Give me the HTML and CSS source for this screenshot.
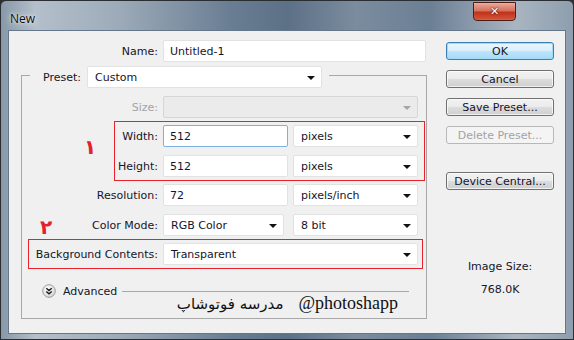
FILE: index.html
```html
<!DOCTYPE html>
<html lang="en">
<head>
    <meta charset="UTF-8">
    <meta name="viewport" content="width=device-width, initial-scale=1.0">
    <link rel="stylesheet" href="styles.css">
    <title>New</title>
</head>
<body>
    <div class="window">
        <div class="titlebar">
            <span class="title">New</span>
            <button class="close">&#x2715;</button>
        </div>
        <div class="client">
            <div class="main">
                <div class="row name-row">
                    <label class="lbl">Name:</label>
                    <input class="field wide" type="text" value="Untitled-1">
                </div>

                <div class="group">
                    <div class="preset-row">
                        <label class="preset-lbl">Preset:</label>
                        <div class="select preset">Custom</div>
                    </div>

                    <div class="row">
                        <label class="lbl disabled">Size:</label>
                        <div class="select full off"></div>
                    </div>

                    <!-- red marker 1 -->
                    <div class="mark mark-one">
                        <div class="row first">
                            <label class="lbl">Width:</label>
                            <input class="field focus" type="text" value="512">
                            <div class="select unit">pixels</div>
                        </div>
                        <div class="row">
                            <label class="lbl">Height:</label>
                            <input class="field" type="text" value="512">
                            <div class="select unit">pixels</div>
                        </div>
                    </div>

                    <div class="row after-mark">
                        <label class="lbl">Resolution:</label>
                        <input class="field" type="text" value="72">
                        <div class="select unit">pixels/inch</div>
                    </div>

                    <div class="row">
                        <label class="lbl">Color Mode:</label>
                        <div class="select mode">RGB Color</div>
                        <div class="select unit">8 bit</div>
                    </div>

                    <!-- red marker 2 -->
                    <div class="mark mark-two">
                        <div class="row first">
                            <label class="lbl">Background Contents:</label>
                            <div class="select full">Transparent</div>
                        </div>
                    </div>

                    <div class="advanced">
                        <svg class="chev" width="14" height="14" viewBox="0 0 14 14">
                            <defs>
                                <radialGradient id="knob" cx="0.4" cy="0.35" r="0.7">
                                    <stop offset="0" stop-color="#ffffff"/>
                                    <stop offset="1" stop-color="#d4d4d4"/>
                                </radialGradient>
                            </defs>
                            <circle cx="7" cy="7" r="6.3" fill="url(#knob)" stroke="#9c9c9c"/>
                            <path d="M4.3 4.2 L7 6.6 L9.7 4.2 M4.3 7.4 L7 9.8 L9.7 7.4" fill="none" stroke="#1c1c1c" stroke-width="1.4"/>
                        </svg>
                        <span>Advanced</span>
                        <div class="rule"></div>
                    </div>

                    <div class="watermark">
                        <span class="fa" lang="fa" dir="rtl">مدرسه فوتوشاپ</span>
                        <span class="handle">@photoshapp</span>
                    </div>

                    <span class="num num-one" lang="fa">۱</span>
                    <span class="num num-two" lang="fa">۲</span>
                </div>
            </div>

            <div class="side">
                <button class="btn default">OK</button>
                <button class="btn">Cancel</button>
                <button class="btn">Save Preset...</button>
                <button class="btn" disabled>Delete Preset...</button>
                <button class="btn device">Device Central...</button>
                <div class="size-label">Image Size:</div>
                <div class="size-value">768.0K</div>
            </div>
        </div>
    </div>
</body>
</html>
```

FILE: styles.css
```css
/* Photoshop "New" dialog, Windows 7 frame */
* {
    box-sizing: border-box;
}

body {
    margin: 0;
    background: #2b2f33;
    font-family: "DejaVu Sans", Verdana, sans-serif;
    font-size: 11px;
    color: #15152a;
}

.window {
    width: 574px;
    height: 340px;
    display: flex;
    flex-direction: column;
    padding: 0 7px 5px 7px;
    border: 1px solid #2a2e33;
    border-radius: 6px 6px 0 0;
    background: linear-gradient(90deg, #8898a8 0%, #b3bfca 6%, #9eacba 20%, #6a7e93 40%, #5c7086 50%, #7b8c9e 62%, #6b7f94 75%, #a9b5c1 90%, #8e9eae 100%);
}

.titlebar {
    height: 29px;
    display: flex;
    align-items: flex-start;
    justify-content: space-between;
}

.title {
    margin: 9px 0 0 2px;
    font-family: "Open Sans", "DejaVu Sans", sans-serif;
    font-size: 12px;
    color: #0c0c0c;
    text-shadow: 0 0 6px rgba(255, 255, 255, 0.9), 0 0 2px rgba(255, 255, 255, 0.8);
}

.close {
    width: 43px;
    height: 19px;
    margin: 1px 50px 0 0;
    padding: 0;
    border: 1px solid #4c1d16;
    border-radius: 0 0 4px 4px;
    background: linear-gradient(#e9aa9c 0%, #d7705c 45%, #c0321c 55%, #d4573a 100%);
    color: #fff;
    font-family: "DejaVu Sans", sans-serif;
    font-size: 11px;
    font-weight: bold;
    line-height: 16px;
    text-shadow: 0 0 2px #4a1208, 0 0 1px #4a1208;
    box-shadow: inset 0 0 1px rgba(255, 255, 255, 0.6);
}

.client {
    flex: 1;
    display: flex;
    border: 1px solid #65778a;
    background: #f0f0f0;
}

/* left column */
.main {
    width: 418px;
    padding: 9px 0 0 12px;
}

.row {
    display: flex;
    align-items: center;
    gap: 5px;
    margin-top: 8px;
}

.name-row {
    margin-top: 0;
}

.name-row .lbl {
    width: 137px;
}

.lbl {
    width: 136px;
    text-align: right;
    white-space: nowrap;
}

.lbl.disabled {
    color: #a3a3a3;
}

.field {
    width: 125px;
    height: 22px;
    padding: 0 6px;
    border: 1px solid #e2e2e2;
    border-radius: 2px;
    background: #fff;
    font-family: inherit;
    font-size: 11px;
    color: #15152a;
    outline: none;
}

.field.wide {
    width: 263px;
}

.field.focus {
    border-color: #7fb1e0;
}

.select {
    position: relative;
    height: 22px;
    line-height: 21px;
    padding: 0 7px;
    border: 1px solid #e2e2e2;
    border-radius: 2px;
    background: #fff;
    white-space: nowrap;
}

.select::after {
    content: "";
    position: absolute;
    right: 6px;
    top: 9px;
    border-left: 4px solid transparent;
    border-right: 4px solid transparent;
    border-top: 4px solid #111;
}

.select.unit {
    width: 125px;
}

.select.full {
    width: 255px;
}

.select.mode {
    width: 121px;
    margin-right: 4px;
}

.select.off {
    background: #ebebeb;
    border-color: #d6d6d6;
}

.select.off::after {
    border-top-color: #a6a6a6;
}

/* group box with Preset legend */
.group {
    position: relative;
    width: 406px;
    margin-top: 13px;
    padding: 0 0 5px 0;
    border: 1px solid #a8a8a8;
}

.preset-row {
    display: flex;
    align-items: center;
    width: fit-content;
    margin: -10px 0 0 8px;
    padding-right: 7px;
    background: #f0f0f0;
}

.preset-lbl {
    width: 57px;
    padding-left: 13px;
}

.select.preset {
    width: 235px;
}

/* red annotation boxes */
.mark {
    border: 1px solid #e8222c;
}

.mark-one {
    width: 311px;
    margin: 3px 0 0 92px;
    padding: 0 0 3px 0;
}

.mark-one .lbl {
    width: 43px;
}

.mark-two {
    width: 395px;
    margin: 3px 0 0 6px;
    padding: 3px 0;
}

.mark-two .lbl {
    width: 129px;
}

.mark .row.first {
    margin-top: 0;
}

.mark-one .row.first {
    margin-top: 3px;
}

.row.after-mark {
    margin-top: 3px;
}

.num {
    position: absolute;
    font-family: "DejaVu Sans", sans-serif;
    font-size: 20px;
    font-weight: bold;
    color: #e3202c;
    line-height: 1;
}

.num-one {
    left: 62px;
    top: 61px;
}

.num-two {
    left: 18px;
    top: 141px;
}

/* advanced + watermark */
.advanced {
    display: flex;
    align-items: center;
    height: 14px;
    margin: 15px 17px 0 20px;
}

.chev {
    display: block;
}

.advanced span {
    margin: 0 5px 0 7px;
}

.rule {
    flex: 1;
    height: 1px;
    background: #a8a8a8;
}

.watermark {
    display: flex;
    justify-content: flex-end;
    align-items: center;
    gap: 15px;
    height: 19px;
    margin-top: -4px;
    padding-right: 28px;
    color: #111;
}

.fa {
    font-family: "DejaVu Sans", sans-serif;
    font-size: 15px;
}

.handle {
    font-family: "Liberation Serif", serif;
    font-size: 18px;
}

/* right column */
.side {
    width: 108px;
    margin-left: 19px;
    padding-top: 11px;
    display: flex;
    flex-direction: column;
}

.btn {
    height: 18px;
    margin-bottom: 10px;
    padding: 0;
    border: 1px solid #707070;
    border-radius: 3px;
    background: linear-gradient(#f2f2f2 0%, #ebebeb 49%, #dddddd 50%, #cfcfcf 100%);
    font-family: inherit;
    font-size: 11px;
    color: #15152a;
    box-shadow: inset 0 0 0 1px rgba(255, 255, 255, 0.7);
}

.btn.default {
    border-color: #3c7fb1;
    background: linear-gradient(#eaf6fd 0%, #d9f0fc 49%, #bee6fd 50%, #a7d9f5 100%);
    box-shadow: inset 0 0 0 1px #9fdcf8;
}

.btn:disabled {
    border-color: #b8b8b8;
    background: #f4f4f4;
    color: #a3a3a3;
    box-shadow: none;
}

.btn.device {
    margin-top: 18px;
}

.size-label {
    margin-top: 60px;
    text-align: center;
}

.size-value {
    margin-top: 10px;
    text-align: center;
}
```
